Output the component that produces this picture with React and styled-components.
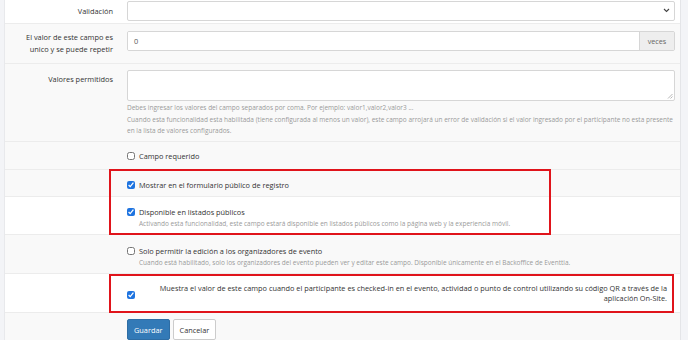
import React from 'react';
import styled, { createGlobalStyle } from 'styled-components';

const GlobalStyle = createGlobalStyle`
  html, body {
    margin: 0;
    padding: 0;
    background: #f3f4f7;
    overflow: hidden;
  }
  body {
    font-family: "Open Sans", "Liberation Sans", sans-serif;
    color: #333;
  }
`;

const Panel = styled.div`
  margin: 0 7px 0 4px;
  border-left: 1px solid #e8e9ec;
  border-right: 1px solid #e4e5e8;
  background: #fff;
  height: 340px;
  overflow: hidden;
`;

const Row = styled.div`
  display: grid;
  grid-template-columns: 115px 1fr;
  align-items: ${p => (p.$center ? 'center' : 'start')};
  background: ${p => (p.$shade ? '#f9f9f9' : '#fff')};
  border-bottom: 1px solid #ececec;
  height: ${p => p.$h}px;
  box-sizing: border-box;
  margin-top: ${p => p.$mt || 0}px;
  padding-top: ${p => p.$pt || 0}px;
`;

const Label = styled.div`
  text-align: right;
  padding-right: 7px;
  font-size: 7.4px;
  line-height: 12px;
  color: #333;
  padding-top: ${p => p.$pt || 0}px;
`;

const Field = styled.div`
  padding: 0 5px 0 7px;
  min-width: 0;
`;

const Select = styled.div`
  height: 20px;
  border: 1px solid #d6d6d6;
  border-radius: 2px;
  background: #fff;
  box-sizing: border-box;
  display: flex;
  align-items: center;
  justify-content: flex-end;
  padding-right: 4px;
  color: #555;
`;

const InputGroup = styled.div`
  display: flex;
  height: 20px;
  border: 1px solid #d6d6d6;
  border-radius: 2px;
  box-sizing: border-box;
  overflow: hidden;
`;

const InputText = styled.div`
  flex: 1;
  background: #fff;
  font-size: 7.4px;
  line-height: 18px;
  padding-left: 6px;
  color: #555;
`;

const Addon = styled.div`
  width: 34px;
  background: #eee;
  border-left: 1px solid #d6d6d6;
  font-size: 7.2px;
  line-height: 18px;
  text-align: center;
  color: #666;
`;

const TextArea = styled.div`
  position: relative;
  height: 31px;
  border: 1px solid #d6d6d6;
  border-radius: 2px;
  background: #fff;
  box-sizing: border-box;
`;

const Grip = styled.svg`
  position: absolute;
  right: 1px;
  bottom: 1px;
`;

const Help = styled.div`
  font-size: 6.5px;
  line-height: 11.5px;
  color: #9a9a9a;
  padding-left: ${p => p.$indent || 0}px;
  margin-top: ${p => p.$mt || 0}px;
`;

const Check = styled.label`
  display: flex;
  align-items: center;
  gap: 4px;
  font-size: 7.35px;
  line-height: 12px;
  color: #333;
`;

const Box = styled.input`
  width: 8px;
  height: 8px;
  margin: 0;
  accent-color: #1f74e0;
`;

const Group = styled.div`
  position: relative;
`;

const Highlight = styled.div`
  position: absolute;
  left: ${p => p.$left}px;
  right: ${p => p.$right ?? 'auto'};
  width: ${p => (p.$width ? `${p.$width}px` : 'auto')};
  top: ${p => p.$top}px;
  bottom: ${p => p.$bottom}px;
  border: 2px solid #e0141b;
  pointer-events: none;
`;

const Wide = styled.div`
  display: flex;
  align-items: center;
  padding: 0 13px 0 7px;
`;

const WideText = styled.div`
  flex: 1;
  text-align: right;
  font-size: 7.35px;
  line-height: 10.5px;
  color: #333;
  padding-left: 14px;
`;

const Buttons = styled.div`
  display: flex;
  gap: 3px;
`;

const Button = styled.button`
  height: 21px;
  padding: 0 ${p => p.$px}px;
  font-family: inherit;
  font-size: 7.35px;
  border-radius: 2px;
  border: 1px solid ${p => (p.$primary ? '#2e6da4' : '#ccc')};
  background: ${p => (p.$primary ? '#337ab7' : '#fff')};
  color: ${p => (p.$primary ? '#fff' : '#333')};
`;

const App = () => (
  <>
    <GlobalStyle />
    <Panel>
      <Row $h={32} $mt={-8} $pt={6} $center>
        <Label>Validación</Label>
        <Field>
          <Select>
            <svg width="7" height="5" viewBox="0 0 7 5">
              <path d="M1 1l2.5 2.5L6 1" fill="none" stroke="#444" strokeWidth="1.1" />
            </svg>
          </Select>
        </Field>
      </Row>

      <Row $h={40} $shade $pt={7}>
        <Label $pt={-1}>El valor de este campo es<br />unico y se puede repetir</Label>
        <Field>
          <InputGroup>
            <InputText>0</InputText>
            <Addon>veces</Addon>
          </InputGroup>
        </Field>
      </Row>

      <Row $h={78} $shade $pt={6}>
        <Label $pt={3}>Valores permitidos</Label>
        <Field>
          <TextArea>
            <Grip width="6" height="6" viewBox="0 0 6 6">
              <path d="M5.5 1L1 5.5M5.5 3.5L3.5 5.5" stroke="#999" strokeWidth="0.7" />
            </Grip>
          </TextArea>
          <Help $mt={1}>
            Debes ingresar los valores del campo separados por coma. Por ejemplo: valor1,valor2,valor3 ...
          </Help>
          <Help>
            Cuando esta funcionalidad esta habilitada (tiene configurada al menos un valor), este campo arrojará un error de validación si el valor ingresado por el participante no esta presente en la lista de valores configurados.
          </Help>
        </Field>
      </Row>

      <Row $h={28} $shade $center>
        <div />
        <Field>
          <Check style={{ marginTop: 1 }}><Box type="checkbox" readOnly />Campo requerido</Check>
        </Field>
      </Row>

      <Group>
        <Row $h={27} $shade $center>
          <div />
          <Field>
            <Check style={{ marginTop: 3 }}><Box type="checkbox" defaultChecked />Mostrar en el formulario público de registro</Check>
          </Field>
        </Row>
        <Row $h={38} $pt={9}>
          <div />
          <Field>
            <Check><Box type="checkbox" defaultChecked />Disponible en listados públicos</Check>
            <Help $indent={12}>
              Activando esta funcionalidad, este campo estará disponible en listados públicos como la página web y la experiencia móvil.
            </Help>
          </Field>
        </Row>
        <Highlight $left={104} $width={438} $top={-1} $bottom={0} />
      </Group>

      <Row $h={39} $shade $pt={10}>
        <div />
        <Field>
          <Check><Box type="checkbox" readOnly />Solo permitir la edición a los organizadores de evento</Check>
          <Help $indent={12}>
            Cuando está habilitado, solo los organizadores del evento pueden ver y editar este campo. Disponible únicamente en el Backoffice de Eventtia.
          </Help>
        </Field>
      </Row>

      <Group>
        <Row $h={39} $center>
          <div />
          <Wide>
            <Box type="checkbox" defaultChecked style={{ marginTop: 4 }} />
            <WideText>
              Muestra el valor de este campo cuando el participante es checked-in en el evento, actividad o punto de control utilizando su código QR a través de la aplicación On-Site.
            </WideText>
          </Wide>
        </Row>
        <Highlight $left={104} $right="6px" $top={0} $bottom={0} />
      </Group>

      <Row $h={40} $shade $pt={6}>
        <div />
        <Field>
          <Buttons>
            <Button $primary $px={6}>Guardar</Button>
            <Button $px={6}>Cancelar</Button>
          </Buttons>
        </Field>
      </Row>
    </Panel>
  </>
);

export default App;
